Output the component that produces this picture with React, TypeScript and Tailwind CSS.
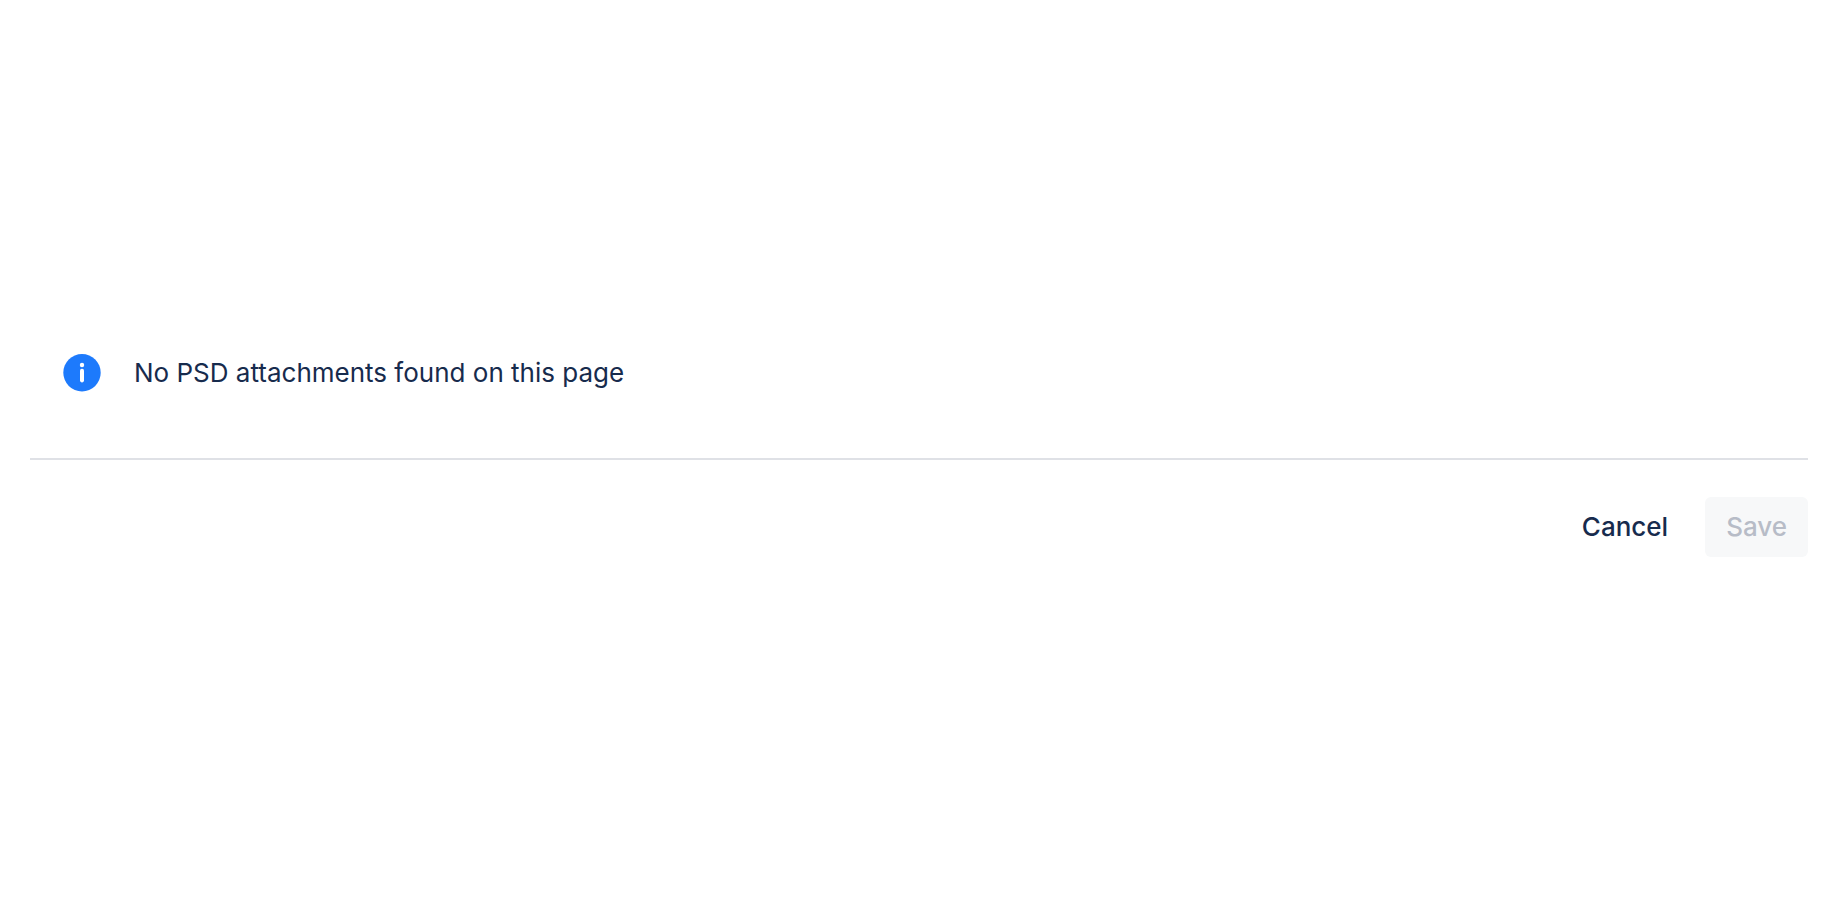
const message = "No PSD attachments found on this page";

function InfoIcon() {
    return (
        <svg className="size-[38px] shrink-0" viewBox="0 0 38 38" aria-hidden="true">
            <circle cx="19" cy="18.7" r="18.7" fill="#1d7afc" />
            <circle cx="19" cy="11" r="2.2" fill="#fff" />
            <rect x="17" y="14.8" width="4" height="13.6" rx="1.8" fill="#fff" />
        </svg>
    );
}

export default function App() {
    return (
        <main className="flex flex-col pl-[30px] pr-8 pt-[354px] font-['Inter',sans-serif] text-[26px] leading-[38px] text-[#172b4d]">
            <section className="flex items-center gap-[33px] px-[33px] pb-[66px]">
                <InfoIcon />
                <p>{message}</p>
            </section>
            <footer className="flex justify-end gap-4 border-t-2 border-[#dfe1e6] pt-[37px] font-medium">
                <button type="button" className="h-[60px] rounded-md px-[21px]">
                    Cancel
                </button>
                <button type="button" disabled className="h-[60px] rounded-md bg-[#f7f8f9] px-[21px] text-[#b7bcc7]">
                    Save
                </button>
            </footer>
        </main>
    );
}
